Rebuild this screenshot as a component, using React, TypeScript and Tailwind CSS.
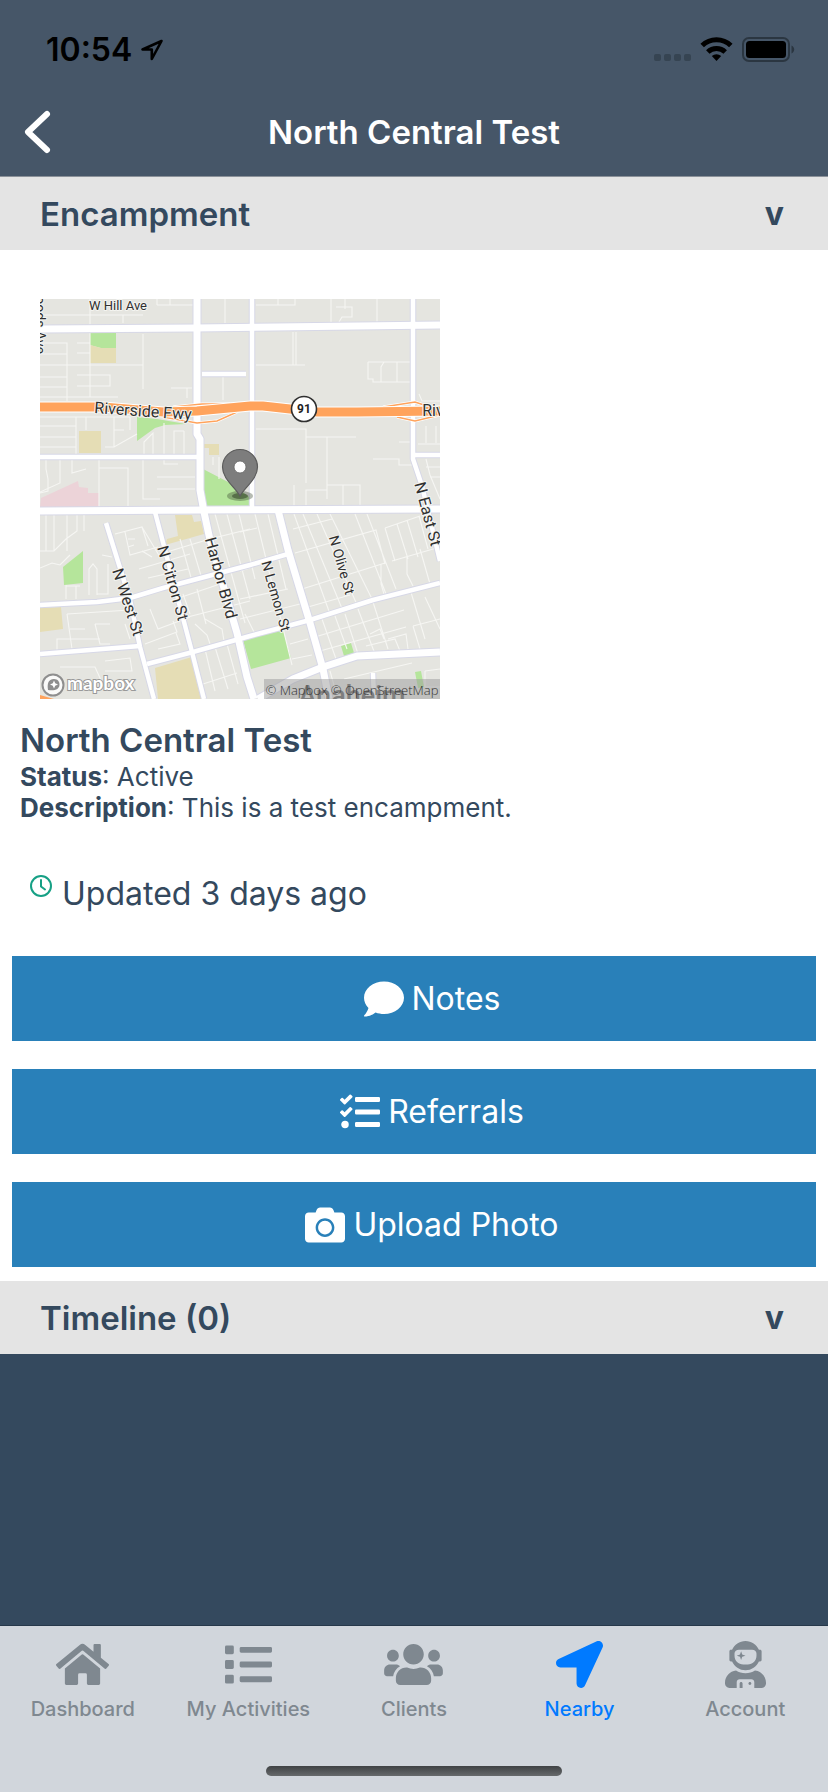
import type { ReactNode } from 'react';
import {
  FaCamera,
  FaComment,
  FaHome,
  FaList,
  FaLocationArrow,
  FaTasks,
  FaUserAstronaut,
  FaUsers,
} from 'react-icons/fa';

function StatusBar() {
  return (
    <div className="flex h-22 items-center justify-between pt-3 pr-[33px] pl-[46px] text-black">
      <div className="flex items-center gap-2">
        <span className="text-[32px] leading-9 font-semibold">10:54</span>
        <svg className="h-6 w-6" viewBox="0 0 24 24" fill="none" stroke="currentColor" strokeWidth="2.6" strokeLinejoin="round">
          <path d="M21.5 3 2.5 11.5h9.3V21z" />
        </svg>
      </div>
      <svg className="h-7 w-[141px]" viewBox="0 0 141 28" aria-label="Wi-Fi on, battery full">
        <g fill="#364452">
          <rect x="0" y="18" width="7" height="7" rx="2" />
          <rect x="10" y="18" width="7" height="7" rx="2" />
          <rect x="20" y="18" width="7" height="7" rx="2" />
          <rect x="30" y="18" width="7" height="7" rx="2" />
        </g>
        <g fill="none" stroke="#000" strokeWidth="5">
          <path d="M48.2 9.500a20.5 20.5 0 0 1 28.6 0" />
          <path d="M53.8 16a12.6 12.6 0 0 1 17.4 0" />
        </g>
        <path d="M57.8 20a7 7 0 0 1 9.4 0l-4.7 5z" />
        <rect x="89" y="2" width="46" height="23" rx="6" fill="none" stroke="#2b3641" strokeWidth="2" />
        <rect x="92" y="5" width="40" height="17" rx="3.5" />
        <path d="M137.5 9.5c3.6 1.6 3.6 6.4 0 8z" fill="#2b3641" />
      </svg>
    </div>
  );
}

function NavBar() {
  return (
    <header className="grid h-[89px] grid-cols-[80px_1fr_80px] items-center border-b border-[#8b9199] text-white">
      <button aria-label="Back" className="flex h-full items-center pl-[23px]">
        <svg className="h-[46px] w-[30px]" viewBox="0 0 30 46" fill="none" stroke="currentColor" strokeWidth="6" strokeLinecap="round" strokeLinejoin="round">
          <path d="M24 5 5 23l19 18" />
        </svg>
      </button>
      <h1 className="text-center text-[33px] leading-10 font-semibold">North Central Test</h1>
    </header>
  );
}

function SectionHeader({ title }: { title: string }) {
  return (
    <button className="flex h-[73px] w-full items-center justify-between bg-[#e4e4e4] pr-11 pl-10 text-left">
      <span className="text-[33px] leading-10 font-semibold">{title}</span>
      <span className="text-[32px] leading-10 font-bold">v</span>
    </button>
  );
}

const majorRoads = [
  'M0 30 155 29 400 26',
  'M157 0V135L160 140V191L164 213 170 241 197 334 207 378 214 400',
  'M0 212 163 211 400 210',
  'M238 211 248 251 270 324 283 370 289 400',
  'M218 400 253 380 283 368 317 357 400 353',
];

const mediumRoads = [
  'M212 0V211',
  'M373 0V160L382 187 400 262',
  'M162 75H206',
  'M0 158H158',
  'M375 156H400',
  'M66 224 90 301 100 348 114 400',
  'M115 213 125 251 152 353 164 400',
  'M0 306 57 303 90 299 123 289 210 266 248 255',
  'M0 355 100 347',
  'M107 365 153 353 210 337 270 321 333 301 400 284',
  'M333 374 334 400',
];

const minorStreets = [
  // north west blocks
  'M0 16H50M50 0V98M83 16V24M117 0V6M103 16H50M117 6H155M0 16H50M130 0V6',
  'M0 44H27V102M0 55H27M0 66H103M103 35V90M0 78H27M0 88H27M0 98H78M37 44H50M37 54H50M37 76H70V87H37',
  'M131 89H152M147 89V99M183 75V101M185 0V24',
  'M0 118H90M0 127H36M0 138H36M0 148H36M36 118V155M74 118V148M74 131H84M65 148H74L97 135M46 118V131M90 118V131',
  'M104 155V143L113 134V155M124 124V155M134 155V132H144M144 132V155',
  'M6 161V170L8 180V192L0 194M20 161V184L0 193M32 161V174L46 170M59 161V208M59 169H88V208M103 161V200H120M117 178H155M117 190H155M124 161V165H138',
  // north east blocks
  'M216 6H255V0M238 0V6M291 0V23M305 0V10M296 8H312V18H302L299 23M337 0V23',
  'M216 66H265M253 33V66M256 33V66M328 63H370M328 63V80H333V83H370M341 83V68L344 63M357 63V83',
  'M216 130H266V184M266 138H316M287 138V200M287 186H320V208M303 186V208M266 208V191H287M254 186V208M359 143H375M333 160H359V166H372M386 127V144M396 127V144M378 145H400M386 160 390 176 400 200M386 168H400M379 95 382 102H400M390 178H400',
  'M173 158V166M179 158V180',
  // south west blocks
  'M6 215V252M14 215V252M27 215V252M37 215V232L26 240 14 252H0M44 215V232M0 269 12 264 20 266 30 256M49 296V270L53 265 57 270V296M57 295H68V265M26 286V300M36 287V300M26 287H40M62 256 72 258',
  'M75 235 102 228 108 247M85 233 90 256 118 248M88 240H95M88 248 94 246M102 252 112 258M99 270 150 255M108 279 148 270M102 228 120 258',
  'M27 315 90 311M27 315 32 350M30 330H45M30 340H45M55 325H70M55 325 60 345H70M110 310 118 330 150 318M105 345 137 333 133 322M118 350 140 345 136 334M85 325 90 340M17 352V340H60M20 368H55L65 390M65 362 90 359 92 372H65',
  // diagonal grid east of Citron
  'M175 215 205 324M187 215 210 300M199 215 215 280M140 240 152 282M150 240 162 280M120 255 170 240 210 230M130 302 180 285M140 320 210 302M157 290 166 325M143 295 150 315M155 325 167 336 170 345M165 320 182 330 184 342M165 350 175 392M175 348 188 390M187 345 198 385M163 385 197 374',
  'M215 215 252 366M228 215 246 290M200 233 217 229M200 300 248 290M200 320 260 305M200 272 210 269M215 335 205 315',
  'M254 215 290 315M263 215 303 312M277 215 318 308M290 215 332 300M315 215 346 295M327 215 356 290M253 230 292 220M255 254 336 231 345 265M262 290 345 264M268 308 310 296M345 229 380 217M345 229 355 262M357 225 368 260M367 221 378 258M379 217 388 250M352 262 400 248M341 265V285L344 295M367 258V275L373 287M380 250 390 285',
  'M282 320 296 360M295 317 307 350M305 315 318 355M318 310 335 355M333 303 348 350M275 338 364 311M280 352 366 328M370 290 385 340M385 298 400 330M373 327 400 320M373 327 380 350M326 347 355 340 360 352M330 335 340 330 344 340M348 340 366 335 368 350M250 345 268 340M252 360 272 356M290 372 295 390M304 380 372 364M385 372 400 370M385 372V388H400',
];

function StreetLabel({ x, y, angle, size, children }: { x: number; y: number; angle: number; size: number; children: string }) {
  return (
    <text x={x} y={y} fontSize={size} textAnchor="middle" dominantBaseline="central" transform={`rotate(${angle} ${x} ${y})`}>
      {children}
    </text>
  );
}

function EncampmentMap() {
  return (
    <svg className="block h-[400px] w-[400px] font-['Roboto',sans-serif]" viewBox="0 0 400 400" role="img" aria-label="Map of North Central Test">
      <rect width="400" height="400" fill="#e5e5e0" />

      {/* parks, schools and hospital grounds */}
      <g fill="#b5e59b">
        <path d="M50 34H76V49H61L50 46zM97 118 117 120 146 125 125 126 115 129 97 142z" />
        <path d="M163 170 190 184 212 200V209H163zM23 268 43 252V284L24 286z" />
        <path d="M203 341 243 331 251 359 211 370zM301 347 311 344 314 354 304 357zM375 373 381 372 384 388 378 389z" />
      </g>
      <g fill="#e5ddb5">
        <path d="M50 46 61 49H76V64H50zM39 132H61V154H39zM163 145H179V156H169V149H163z" />
        <path d="M135 216H152L154 223 161 222 164 235 125 246 127 240 138 237zM0 309 21 308 23 330 0 333zM115 369 152 358 164 400H118z" />
      </g>
      <path d="M1 199 38 182 39 188 48 189V194H59V208H0z" fill="#ecd3d8" />

      <g fill="none" stroke="#f6f6f3" strokeWidth="1.1">
        {minorStreets.map((d) => (
          <path key={d} d={d} />
        ))}
      </g>

      <g fill="none" strokeLinejoin="round">
        <g stroke="#d7d8e7">
          {mediumRoads.map((d) => <path key={d} d={d} strokeWidth="6.5" />)}
          {majorRoads.map((d) => <path key={d} d={d} strokeWidth="9" />)}
        </g>
        <g stroke="#fff">
          {mediumRoads.map((d) => <path key={d} d={d} strokeWidth="4.5" />)}
          {majorRoads.map((d) => <path key={d} d={d} strokeWidth="7" />)}
        </g>
      </g>

      {/* freeway and its ramps */}
      <g fill="none">
        <g stroke="#fff" strokeWidth="3">
          <path d="M133 108 162 105H190M123 118 157 124 177 122 197 113M343 108 375 103 390 108M357 118 375 122 400 116" />
        </g>
        <g stroke="#ffa35c" strokeWidth="1.4">
          <path d="M133 108 162 105H190M123 118 157 124 177 122 197 113M343 108 375 103 390 108M357 118 375 122 400 116" />
        </g>
        <path d="M0 108H63L123 113 157 112 210 107H223L250 110 277 113H317L400 112" stroke="#fff" strokeWidth="11" />
        <path d="M0 108H63L123 113 157 112 210 107H223L250 110 277 113H317L400 112" stroke="#ffa35c" strokeWidth="9" />
      </g>
      <path d="M0 396 14 400H0z" fill="#ffa35c" />

      <g fill="#303030" stroke="#f4f4f0" strokeWidth="2" paintOrder="stroke" strokeLinejoin="round">
        <StreetLabel x={78} y={6} angle={0} size={13}>W Hill Ave</StreetLabel>
        <StreetLabel x={103} y={112} angle={4} size={16}>Riverside Fwy</StreetLabel>
        <StreetLabel x={393} y={111} angle={0} size={16}>Riv</StreetLabel>
        <StreetLabel x={0} y={20} angle={90} size={14}>Woods Ave</StreetLabel>
        <StreetLabel x={88} y={303} angle={72} size={16}>N West St</StreetLabel>
        <StreetLabel x={133} y={284} angle={74} size={16}>N Citron St</StreetLabel>
        <StreetLabel x={181} y={279} angle={75} size={16}>Harbor Blvd</StreetLabel>
        <StreetLabel x={236} y={297} angle={74} size={14}>N Lemon St</StreetLabel>
        <StreetLabel x={302} y={266} angle={74} size={14}>N Olive St</StreetLabel>
        <StreetLabel x={388} y={215} angle={75} size={16}>N East St</StreetLabel>
      </g>

      <circle cx="264" cy="110" r="12.5" fill="#fff" stroke="#303030" strokeWidth="1.6" />
      <text x="264" y="110" fontSize="12" fontWeight="700" textAnchor="middle" dominantBaseline="central" fill="#222">91</text>

      {/* pin */}
      <ellipse cx="200" cy="197" rx="13" ry="5" fill="#2f3d26" opacity="0.35" />
      <ellipse cx="200" cy="197" rx="8" ry="3" fill="#1f2a18" opacity="0.45" />
      <path d="M200 197C195 188 182.500 180 182.500 168a17.500 17.500 0 0 1 35 0C217.500 180 205 188 200 197z" fill="#7d7d7d" stroke="#5c5c5c" strokeWidth="1.2" />
      <circle cx="200" cy="168" r="6" fill="#fff" stroke="#666" strokeWidth="0.8" />

      {/* mapbox mark */}
      <circle cx="13" cy="386" r="10.5" fill="#fff" fillOpacity="0.8" stroke="#8e8e8e" strokeWidth="2" />
      <path d="M8 391c-1-6 0-11 6-11 4 0 5.500 3 5.500 5.500 0 5-5 6.500-11.500 5.500z" fill="#8e8e8e" />
      <path d="m14 381.500 1.200 2.800 2.800 1.200-2.800 1.200-1.200 2.800-1.200-2.800-2.800-1.200 2.800-1.200z" fill="#fff" />
      <text x="27" y="391" fontSize="19" fontWeight="700" fill="#fff" stroke="#999" strokeWidth="2" paintOrder="stroke" className="font-['Lato',sans-serif]">mapbox</text>

      <text x="312" y="406" fontSize="27" fontWeight="500" textAnchor="middle" fill="#606060">Anaheim</text>
      <rect x="224" y="380" width="176" height="20" fill="#9b9b9b" fillOpacity="0.5" />
      <text x="312" y="396" fontSize="13" fontWeight="300" textAnchor="middle" fill="#333" className="font-['Open_Sans',sans-serif]">© Mapbox © OpenStreetMap</text>
    </svg>
  );
}

function ActionButton({ icon, label }: { icon: ReactNode; label: string }) {
  return (
    <button className="flex h-[85px] w-full items-center justify-center gap-2 bg-[#2980b9] pl-9 text-[32px] text-white">
      {icon}
      <span>{label}</span>
    </button>
  );
}

const tabs = [
  { label: 'Dashboard', icon: <FaHome className="h-[47px] w-[53px]" /> },
  { label: 'My Activities', icon: <FaList className="h-[47px] w-[47px]" /> },
  { label: 'Clients', icon: <FaUsers className="h-[47px] w-[59px]" /> },
  { label: 'Nearby', icon: <FaLocationArrow className="h-[47px] w-[47px]" />, active: true },
  { label: 'Account', icon: <FaUserAstronaut className="h-[47px] w-[41px]" /> },
];

function TabBar() {
  return (
    <footer className="bg-[#d1d6dc] pb-4">
      <nav className="grid grid-cols-5 border-t border-[#26384a] pt-[15px]">
        {tabs.map((tab) => (
          <a
            key={tab.label}
            href="#"
            aria-current={tab.active ? 'page' : undefined}
            className={`flex flex-col items-center gap-2 ${tab.active ? 'text-[#007aff]' : 'text-[#7f8890]'}`}
          >
            {tab.icon}
            <span className="text-[20px] leading-[26px] font-medium whitespace-nowrap">{tab.label}</span>
          </a>
        ))}
      </nav>
      <div className="mx-auto mt-11 h-[10px] w-[296px] rounded-full bg-linear-to-b from-[#404345] to-[#66696b]" />
    </footer>
  );
}

export default function App() {
  return (
    <div className="flex min-h-screen flex-col bg-[#34495e] font-['Inter',sans-serif] text-[#34495e]">
      <div className="bg-[#465668]">
        <StatusBar />
        <NavBar />
      </div>

      <main className="flex-1">
        <SectionHeader title="Encampment" />
        <section className="bg-white px-3 pt-[49px] pb-[14px]">
          <div className="pl-7">
            <EncampmentMap />
          </div>
          <div className="mt-5 pl-2">
            <h2 className="text-[33px] leading-[42px] font-semibold">North Central Test</h2>
            <p className="text-[26px] leading-[31px]">
              <b>Status</b>: Active
            </p>
            <p className="text-[26px] leading-[31px]">
              <b>Description</b>: This is a test encampment.
            </p>
          </div>
          <div className="mt-12 mb-[39px] flex items-start gap-[10px] pl-[18px]">
            <svg className="mt-1 h-[22px] w-[22px]" viewBox="0 0 22 22" fill="none" stroke="#16a085" strokeWidth="2" strokeLinecap="round">
              <circle cx="11" cy="11" r="10" />
              <path d="M11 5v6.500l4 3" strokeLinejoin="round" />
            </svg>
            <p className="text-[32px] leading-[46px]">Updated 3 days ago</p>
          </div>
          <div className="flex flex-col gap-7">
            <ActionButton icon={<FaComment className="h-10 w-10" />} label="Notes" />
            <ActionButton icon={<FaTasks className="h-10 w-10" />} label="Referrals" />
            <ActionButton icon={<FaCamera className="h-10 w-10" />} label="Upload Photo" />
          </div>
        </section>
        <SectionHeader title="Timeline (0)" />
      </main>

      <TabBar />
    </div>
  );
}
